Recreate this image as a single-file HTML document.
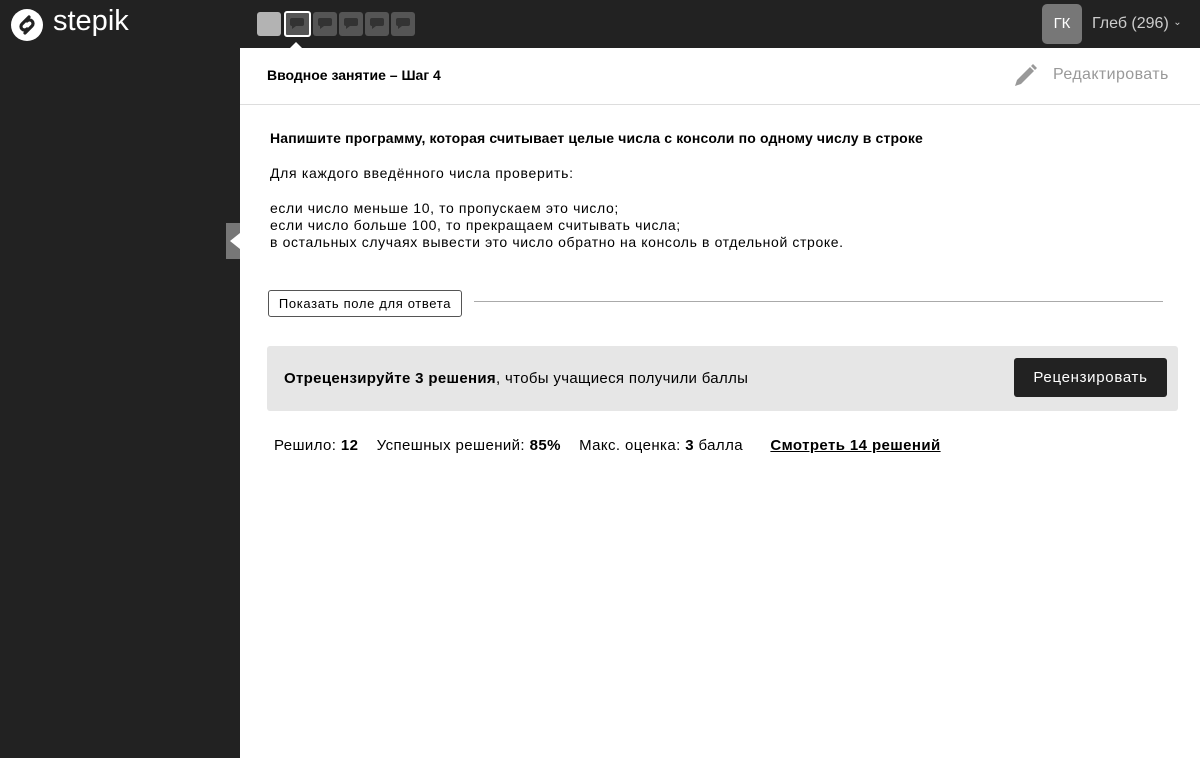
<!DOCTYPE html>
<html><head><meta charset="utf-8"><style>
*{margin:0;padding:0;box-sizing:border-box}
body{width:1200px;height:758px;overflow:hidden;background:#fff;font-family:"Liberation Sans","Noto Sans CJK SC",sans-serif;color:#000;position:relative}
.hdr{position:absolute;left:0;top:0;width:1200px;height:48px;background:#222}
.side{position:absolute;left:0;top:48px;width:240px;height:710px;background:#222}
.st{position:absolute;top:12px;width:24px;height:24px;border-radius:3px;background:#555}
.st svg{position:absolute;left:4px;top:5px}
.abs{position:absolute;white-space:nowrap}
</style></head><body>
<div class="hdr"></div>
<div class="side"></div>
<svg class="abs" style="left:10px;top:8px" width="34" height="34" viewBox="0 0 34 34"><circle cx="17" cy="17" r="16" fill="#fff"/><path d="M19 9 L12 16 a3.5 3.5 0 0 0 5 5 M15 25 L22 18 a3.5 3.5 0 0 0 -5 -5" stroke="#222" stroke-width="3.2" fill="none" stroke-linecap="round"/></svg>
<div class="abs" style="left:53px;top:5px;color:#fff;font-size:29px">stepik</div>
<div class="st" style="left:257px;background:#b3b3b3"></div>
<div class="st" style="left:284px;border:2px solid #fff;width:27px;height:26px;top:11px"><svg width="16" height="14" viewBox="0 0 16 14" style="left:3px;top:4px"><path d="M3 1h10a2 2 0 0 1 2 2v4a2 2 0 0 1-2 2H7l-4 3v-3a2 2 0 0 1-2-2V3a2 2 0 0 1 2-2z" fill="#333"/></svg></div>
<div class="st" style="left:313px"><svg width="16" height="14" viewBox="0 0 16 14"><path d="M3 1h10a2 2 0 0 1 2 2v4a2 2 0 0 1-2 2H7l-4 3v-3a2 2 0 0 1-2-2V3a2 2 0 0 1 2-2z" fill="#333"/></svg></div>
<div class="st" style="left:339px"><svg width="16" height="14" viewBox="0 0 16 14"><path d="M3 1h10a2 2 0 0 1 2 2v4a2 2 0 0 1-2 2H7l-4 3v-3a2 2 0 0 1-2-2V3a2 2 0 0 1 2-2z" fill="#333"/></svg></div>
<div class="st" style="left:365px"><svg width="16" height="14" viewBox="0 0 16 14"><path d="M3 1h10a2 2 0 0 1 2 2v4a2 2 0 0 1-2 2H7l-4 3v-3a2 2 0 0 1-2-2V3a2 2 0 0 1 2-2z" fill="#333"/></svg></div>
<div class="st" style="left:391px"><svg width="16" height="14" viewBox="0 0 16 14"><path d="M3 1h10a2 2 0 0 1 2 2v4a2 2 0 0 1-2 2H7l-4 3v-3a2 2 0 0 1-2-2V3a2 2 0 0 1 2-2z" fill="#333"/></svg></div>
<div class="abs" style="left:289px;top:42px;width:0;height:0;border-left:7px solid transparent;border-right:7px solid transparent;border-bottom:7px solid #fff"></div>
<div class="abs" style="left:1042px;top:4px;width:40px;height:40px;border-radius:5px;background:#777;color:#fff;font-size:15px;text-align:center;line-height:40px">ГК</div>
<div class="abs" style="left:1092px;top:15px;color:#ccc;font-size:16px">Глеб (296) <span style="font-size:10px;vertical-align:3px">⌄</span></div>
<div class="abs" style="left:267px;top:67px;font-size:14px;font-weight:bold">Вводное занятие – Шаг 4</div>
<svg class="abs" style="left:1012px;top:63px" width="26" height="26" viewBox="0 0 26 26"><path d="M3 23 L5 17 L18 4 L22 8 L9 21 Z" fill="#999"/><path d="M19 3 l2-2 4 4-2 2z" fill="#999"/></svg>
<div class="abs" style="left:1053px;top:66px;font-size:16px;color:#999;letter-spacing:0.4px">Редактировать</div>
<div class="abs" style="left:240px;top:104px;width:960px;height:1px;background:#ddd"></div>
<div class="abs" style="left:226px;top:223px;width:14px;height:36px;background:#777"></div>
<div class="abs" style="left:230px;top:233px;width:0;height:0;border-top:8px solid transparent;border-bottom:8px solid transparent;border-right:10px solid #fff"></div>
<div class="abs" style="left:270px;top:130px;font-size:14px;font-weight:bold;letter-spacing:0.15px">Напишите программу, которая считывает целые числа с консоли по одному числу в строке</div>
<div class="abs" style="left:270px;top:165px;font-size:14px;letter-spacing:0.7px">Для каждого введённого числа проверить:</div>
<div class="abs" style="left:270px;top:200px;font-size:14px;line-height:17px;letter-spacing:0.62px">если число меньше 10, то пропускаем это число;<br>если число больше 100, то прекращаем считывать числа;<br>в остальных случаях вывести это число обратно на консоль в отдельной строке.</div>
<div class="abs" style="left:268px;top:290px;width:194px;height:27px;border:1px solid #555;border-radius:3px;font-size:13px;line-height:25px;text-align:center;letter-spacing:0.65px">Показать поле для ответа</div>
<div class="abs" style="left:474px;top:301px;width:689px;height:1px;background:#aaa"></div>
<div class="abs" style="left:267px;top:346px;width:911px;height:65px;background:#e6e6e6;border-radius:3px"></div>
<div class="abs" style="left:284px;top:370px;font-size:15px;letter-spacing:0.33px"><b>Отрецензируйте 3 решения</b>, чтобы учащиеся получили баллы</div>
<div class="abs" style="left:1014px;top:358px;width:153px;height:39px;background:#222;border-radius:3px;color:#fff;font-size:15px;text-align:center;line-height:39px;letter-spacing:0.7px">Рецензировать</div>
<div class="abs" style="left:274px;top:437px;font-size:15px;letter-spacing:0.4px">Решило: <b>12</b>&nbsp;&nbsp;&nbsp;&nbsp;Успешных решений: <b>85%</b>&nbsp;&nbsp;&nbsp;&nbsp;Макс. оценка: <b>3</b> балла&nbsp;&nbsp;&nbsp;&nbsp;&nbsp;&nbsp;<b style="text-decoration:underline">Смотреть 14 решений</b></div>
</body></html>
